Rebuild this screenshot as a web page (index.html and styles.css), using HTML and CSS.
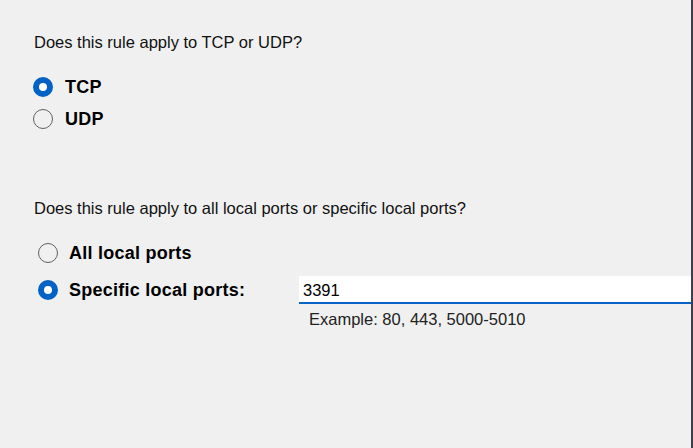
FILE: index.html
```html
<!DOCTYPE html>
<html>
<head>
<meta charset="utf-8">
<link rel="stylesheet" href="styles.css">
</head>
<body>
<div class="page">
  <section class="group proto">
    <p class="question">Does this rule apply to TCP or UDP?</p>
    <div class="options">
      <div class="opt"><span class="radio on"></span><span class="lbl">TCP</span></div>
      <div class="opt"><span class="radio"></span><span class="lbl">UDP</span></div>
    </div>
  </section>
  <section class="group ports">
    <p class="question">Does this rule apply to all local ports or specific local ports?</p>
    <div class="options">
      <div class="opt all"><span class="radio"></span><span class="lbl">All local ports</span></div>
      <div class="specific">
        <div class="opt left"><span class="radio on"></span><span class="lbl">Specific local ports:</span></div>
        <div class="field">
          <div class="input">3391</div>
          <div class="example">Example: 80, 443, 5000-5010</div>
        </div>
      </div>
    </div>
  </section>
</div>
</body>
</html>
```
FILE: styles.css
```css
html, body {
  margin: 0;
  padding: 0;
  height: 100%;
}
body {
  background: #f0f0f0;
  font-family: "Liberation Sans", Arial, sans-serif;
  color: #000;
}
.page {
  box-sizing: border-box;
  height: 448px;
  width: 693px;
  border-right: 2px solid #3b404c;
  padding-top: 32px;
}
.question {
  margin: 0;
  font-size: 16.5px;
  line-height: 20px;
  color: #111;
  padding-left: 34px;
}
.proto .options {
  margin-top: 19px;
  padding-left: 33px;
}
.proto .opt {
  height: 32px;
}
.opt {
  display: flex;
  align-items: center;
}
.lbl {
  font-weight: bold;
  font-size: 18px;
  line-height: 22px;
  letter-spacing: 0.25px;
  color: #000;
}
.radio {
  box-sizing: border-box;
  width: 20px;
  height: 20px;
  border-radius: 50%;
  border: 1.5px solid #606060;
  flex: none;
  margin-right: 12px;
}
.radio.on {
  border: 6.5px solid #0062c4;
  background: #fff;
}
.ports {
  margin-top: 63px;
}
.ports .options {
  margin-top: 17px;
  padding-left: 38px;
}
.ports .radio {
  margin-right: 11px;
}
.ports .all {
  height: 36px;
}
.specific {
  display: flex;
  align-items: flex-start;
  margin-top: 5px;
}
.specific .left {
  width: 261px;
  height: 28px;
  flex: none;
}
.field {
  flex: 1;
}
.input {
  box-sizing: border-box;
  height: 28px;
  background: #fff;
  border-bottom: 2px solid #0a64c8;
  font-size: 16.5px;
  line-height: 24px;
  padding: 2px 0 0 4px;
  color: #000;
}
.example {
  margin-top: 5px;
  padding-left: 10px;
  font-size: 16.5px;
  line-height: 20px;
  color: #222;
}
```
